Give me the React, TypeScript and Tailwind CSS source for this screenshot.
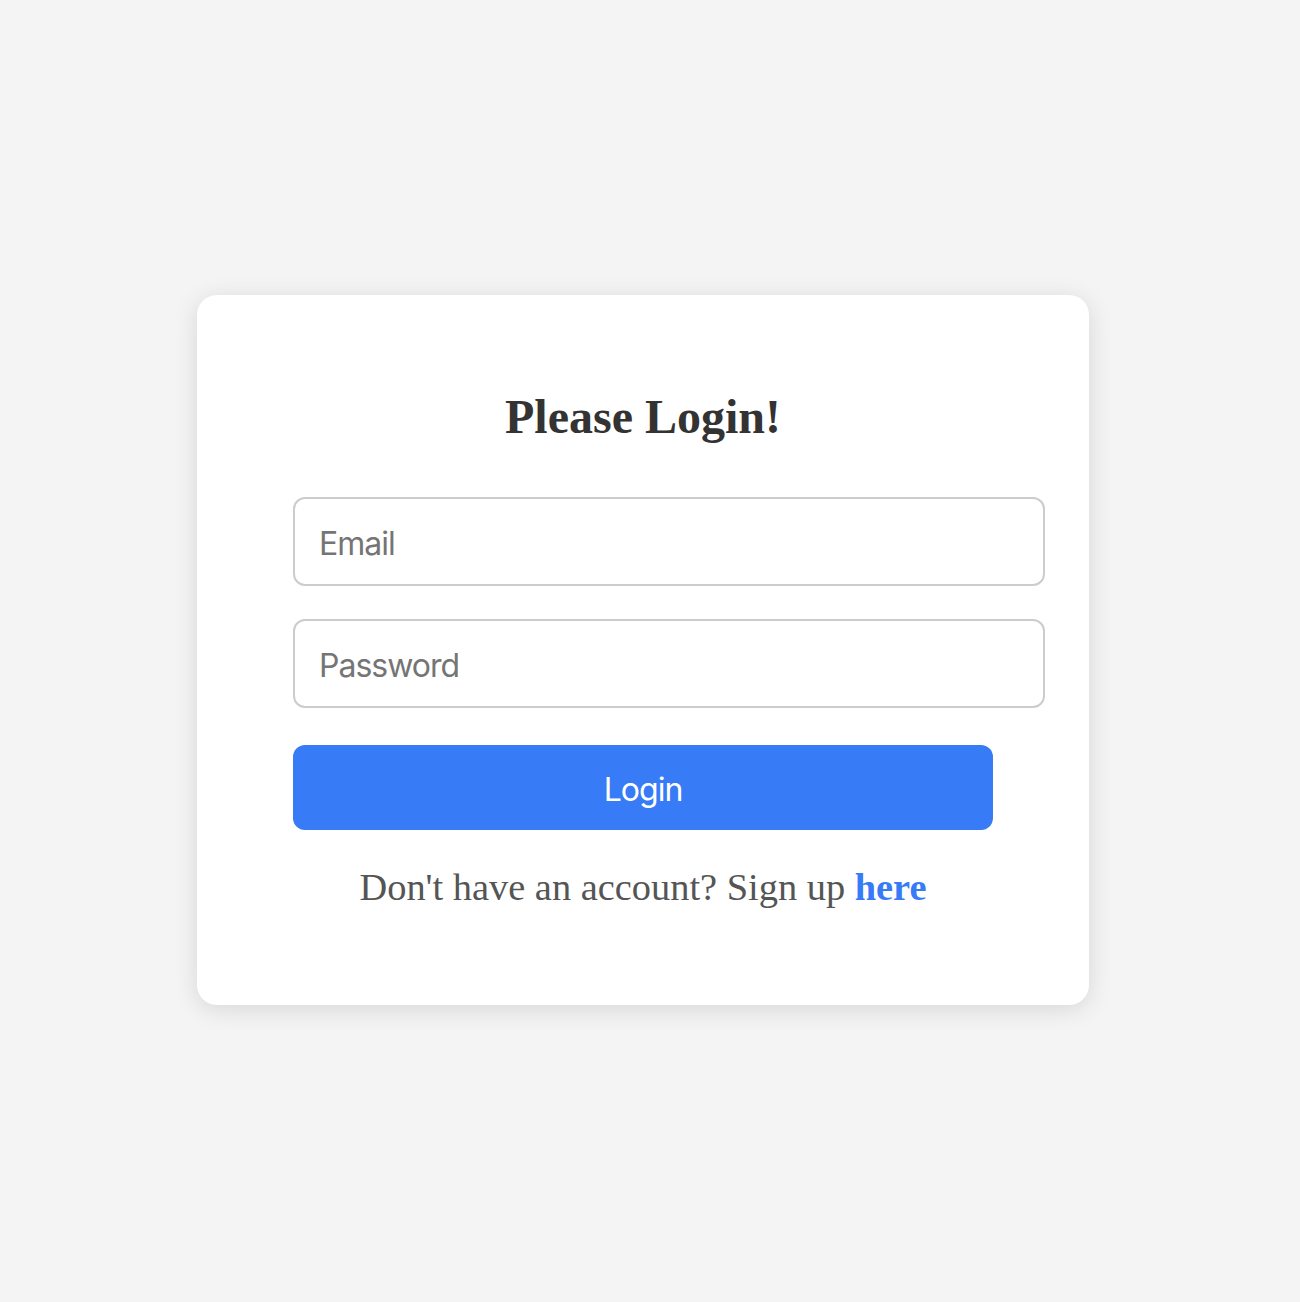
import React from "react";

export default function App() {
  return (
    <div className="min-h-screen w-full flex items-center justify-center bg-[#f4f4f4] pr-[14px] pb-[2px]">
      <div className="w-[892px] bg-white rounded-[20px] shadow-[0_4px_24px_rgba(0,0,0,0.12)] px-[96px] pt-[95px] pb-[96px]">
        <h1 className="text-center text-[48px] leading-[53px] font-bold text-[#333] mb-[54px] font-['Liberation_Serif','Times_New_Roman',serif]">
          Please Login!
        </h1>
        <input
          type="email"
          placeholder="Email"
          className="block w-[752px] h-[89px] border-2 border-[#cccccc] rounded-[12px] px-[24px] pt-[4px] text-[32px] tracking-[-1px] text-[#333] placeholder:text-[#757575] outline-none font-['Inter','Liberation_Sans',sans-serif]"
        />
        <input
          type="password"
          placeholder="Password"
          className="block mt-[33px] w-[752px] h-[89px] border-2 border-[#cccccc] rounded-[12px] px-[24px] pt-[4px] text-[32px] tracking-[-1px] text-[#333] placeholder:text-[#757575] outline-none font-['Inter','Liberation_Sans',sans-serif]"
        />
        <button className="block mt-[37px] w-full h-[85px] pt-[4px] rounded-[12px] bg-[#377bf6] text-white text-[32px] tracking-[-1px] font-['Inter','Liberation_Sans',sans-serif]">
          Login
        </button>
        <p className="mt-[36px] text-center text-[38.4px] leading-[43px] text-[#555] font-['Liberation_Serif','Times_New_Roman',serif]">
          Don't have an account? Sign up{" "}
          <a href="#" className="font-bold text-[#377bf6] no-underline">
            here
          </a>
        </p>
      </div>
    </div>
  );
}
